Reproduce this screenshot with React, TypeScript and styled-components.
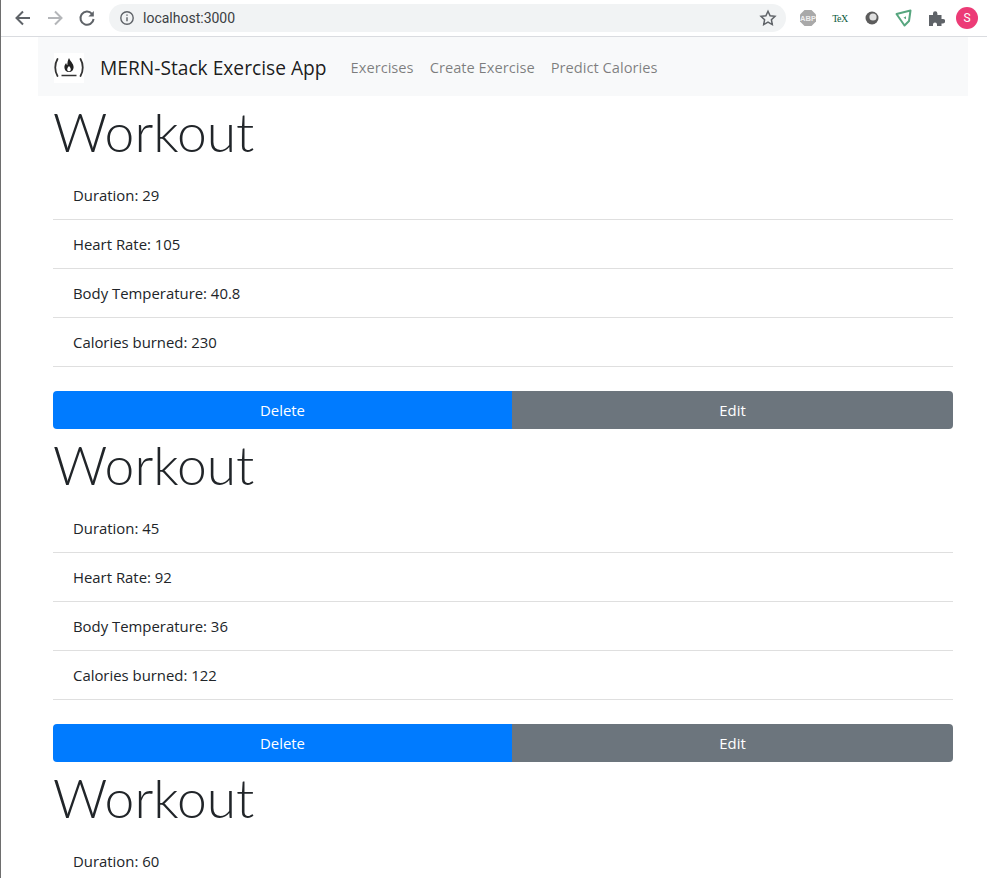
import * as React from 'react';
import styled, { createGlobalStyle } from 'styled-components';

const GlobalStyle = createGlobalStyle`
  html, body {
    margin: 0;
    height: 878px;
    overflow: hidden;
    background: #fff;
  }
  body {
    font-family: "Open Sans", "Noto Sans", sans-serif;
    color: #212529;
  }
`;

const Window = styled.div`
  border-left: 1px solid #6e6e6e;
  height: 878px;
  overflow: hidden;
`;

const BrowserBar = styled.header`
  height: 36px;
  border-bottom: 1px solid #dadce0;
  display: flex;
  align-items: center;
  padding: 0 0 0 12px;
`;

const NavIcon = styled.svg<{ $faded?: boolean }>`
  width: 20px;
  height: 20px;
  margin-right: 12px;
  flex: none;
  fill: none;
  stroke: ${p => (p.$faded ? '#b4b6b9' : '#5f6368')};
  stroke-width: 2;
`;

const AddressBar = styled.div`
  flex: none;
  width: 677px;
  height: 28px;
  border-radius: 14px;
  background: #f1f3f4;
  display: flex;
  align-items: center;
  padding: 0 9px 0 10px;
  box-sizing: border-box;
  font-family: "Roboto", sans-serif;
  font-size: 14px;
  color: #3c4043;
`;

const InfoIcon = styled.svg`
  width: 16px;
  height: 16px;
  margin-right: 8px;
  fill: none;
  stroke: #5f6368;
  stroke-width: 1.4;
`;

const StarIcon = styled.svg`
  width: 18px;
  height: 18px;
  margin-left: auto;
  fill: none;
  stroke: #5f6368;
  stroke-width: 1.5;
`;

const Extensions = styled.div`
  display: flex;
  align-items: center;
  gap: 14px;
  margin-left: 13px;
`;

const ExtensionIcon = styled.svg`
  width: 18px;
  height: 18px;
  flex: none;
`;

const Avatar = styled.div`
  width: 22px;
  height: 22px;
  border-radius: 50%;
  background: #ec3b76;
  color: #fff;
  font-family: "Roboto", sans-serif;
  font-size: 12px;
  display: flex;
  align-items: center;
  justify-content: center;
  margin-left: -3px;
`;

const Container = styled.main`
  width: 930px;
  margin-left: 37px;
`;

const Navbar = styled.nav`
  height: 59px;
  background: #f8f9fa;
  display: flex;
  align-items: center;
  padding: 0 15px 0 16px;
  box-sizing: border-box;
`;

const BrandLogo = styled.svg`
  width: 30px;
  height: 30px;
  background: #fff;
  margin: 2px 16px 0 0;
  flex: none;
`;

const BrandName = styled.span`
  font-size: 19.2px;
  color: rgba(0, 0, 0, 0.9);
  margin-right: 24px;
  padding-top: 2px;
  white-space: nowrap;
`;

const NavLink = styled.a`
  font-size: 14.7px;
  color: rgba(0, 0, 0, 0.5);
  margin-right: 16px;
  white-space: nowrap;
`;

const Workout = styled.section`
  padding: 0 15px;
`;

const Title = styled.h1`
  margin: 0;
  height: 75px;
  font-family: "Lato", "Open Sans", sans-serif;
  font-size: 53.4px;
  line-height: 70px;
  font-weight: 300;
  color: #212529;
`;

const Stats = styled.ul`
  list-style: none;
  margin: 0 0 24px;
  padding: 0;
`;

const Stat = styled.li`
  height: 48px;
  line-height: 48px;
  padding: 0 20px;
  border-bottom: 1px solid #dfdfdf;
  font-size: 14.9px;
  white-space: nowrap;
`;

const ButtonGroup = styled.div`
  display: flex;
  height: 38px;
`;

const Button = styled.button<{ $grow: number; $variant: 'primary' | 'secondary' }>`
  flex: ${p => p.$grow} 0 0;
  border: 0;
  padding: 0;
  color: #fff;
  font-family: inherit;
  font-size: 14.9px;
  background: ${p => (p.$variant === 'primary' ? '#007bff' : '#6c757d')};
  border-radius: ${p => (p.$variant === 'primary' ? '4px 0 0 4px' : '0 4px 4px 0')};
`;

// the last workout runs off the bottom of the window, only its first row shows
const workouts = [
  { stats: ['Duration: 29', 'Heart Rate: 105', 'Body Temperature: 40.8', 'Calories burned: 230'], actions: true },
  { stats: ['Duration: 45', 'Heart Rate: 92', 'Body Temperature: 36', 'Calories burned: 122'], actions: true },
  { stats: ['Duration: 60'], actions: false },
];

export default function App() {
  return (
    <Window>
      <GlobalStyle />
      <BrowserBar>
        <NavIcon viewBox="0 0 20 20">
          <path d="M17 10H4M10 3.500 3.500 10l6.500 6.500" />
        </NavIcon>
        <NavIcon viewBox="0 0 20 20" $faded>
          <path d="M3 10h13M10 3.500l6.500 6.500-6.500 6.500" />
        </NavIcon>
        <NavIcon viewBox="0 0 20 20">
          <path d="M15 5.800A6.600 6.600 0 1 0 16.600 11" />
          <path d="M16.800 3v5.400h-5.400z" fill="#5f6368" stroke="none" />
        </NavIcon>
        <AddressBar>
          <InfoIcon viewBox="0 0 16 16">
            <circle cx="8" cy="8" r="6.200" />
            <path d="M8 7.200v4M8 4.400v1.400" />
          </InfoIcon>
          localhost:3000
          <StarIcon viewBox="0 0 18 18">
            <path d="M9 2.200l2.100 4.500 4.900.6-3.600 3.400.9 4.900L9 13.200l-4.300 2.400.9-4.900L2 7.300l4.900-.6z" />
          </StarIcon>
        </AddressBar>
        <Extensions>
          <ExtensionIcon viewBox="0 0 18 18">
            <path d="M5.500 1h7L17 5.500v7L12.500 17h-7L1 12.500v-7z" fill="#a9a9a9" />
            <text x="9" y="11.500" textAnchor="middle" fontSize="7.500" fontWeight="700" fontFamily="Liberation Sans" fill="#eee">ABP</text>
          </ExtensionIcon>
          <ExtensionIcon viewBox="0 0 18 18">
            <text x="9" y="12.500" textAnchor="middle" fontSize="10" fontFamily="Liberation Serif" fill="#0c5a3c" letterSpacing="-0.5">TeX</text>
          </ExtensionIcon>
          <ExtensionIcon viewBox="0 0 18 18">
            <circle cx="9" cy="9" r="6.500" fill="#5c5c5c" />
            <circle cx="10" cy="8" r="3.600" fill="#e0e0e0" />
          </ExtensionIcon>
          <ExtensionIcon viewBox="0 0 18 18">
            <path d="M1.500 5 15.500 1.500 14 12 9.500 16.500z" fill="none" stroke="#57a67f" strokeWidth="2" strokeLinejoin="round" />
            <path d="M11 7.200v3L8.500 8.800z" fill="#57a67f" />
          </ExtensionIcon>
          <ExtensionIcon viewBox="0 0 18 18">
            <path d="M2 6h4V4.500a2.200 2.200 0 0 1 4.400 0V6h4.100v4H16a2.200 2.200 0 0 1 0 4.400h-1.500V17H10v-1.500a2 2 0 0 0-4 0V17H2z" fill="#5f6368" />
          </ExtensionIcon>
          <Avatar>S</Avatar>
        </Extensions>
      </BrowserBar>
      <Container>
        <Navbar>
          <BrandLogo viewBox="0 0 30 30">
            <path d="M3.500 6C0.500 11 0.500 18 3.500 23M26.500 6C29.500 11 29.500 18 26.500 23" fill="none" stroke="#333" strokeWidth="1.800" strokeLinecap="round" />
            <path d="M15 5c1 3 4.600 5.500 4.600 9 0 3-2 5-4.600 5s-4.600-2-4.600-5c0-2 1-3 1.800-4 .2 1.200.6 1.800 1.200 2.200C13.200 9.500 14 7 15 5z" fill="#222" />
            <path d="M15 13c.8 1.200 1.800 2 1.800 3.400 0 1-.8 1.800-1.800 1.800s-1.800-.8-1.800-1.800c0-1.400 1-2.200 1.800-3.400z" fill="#fff" />
            <path d="M7.500 22.500h15" stroke="#333" strokeWidth="1.500" />
          </BrandLogo>
          <BrandName>MERN-Stack Exercise App</BrandName>
          <NavLink>Exercises</NavLink>
          <NavLink>Create Exercise</NavLink>
          <NavLink>Predict Calories</NavLink>
        </Navbar>
        {workouts.map(w => (
          <Workout key={w.stats[0]}>
            <Title>Workout</Title>
            <Stats>
              {w.stats.map(s => <Stat key={s}>{s}</Stat>)}
            </Stats>
            {w.actions ? (
              <ButtonGroup>
                <Button $grow={459} $variant="primary">Delete</Button>
                <Button $grow={441} $variant="secondary">Edit</Button>
              </ButtonGroup>
            ) : null}
          </Workout>
        ))}
      </Container>
    </Window>
  );
}
